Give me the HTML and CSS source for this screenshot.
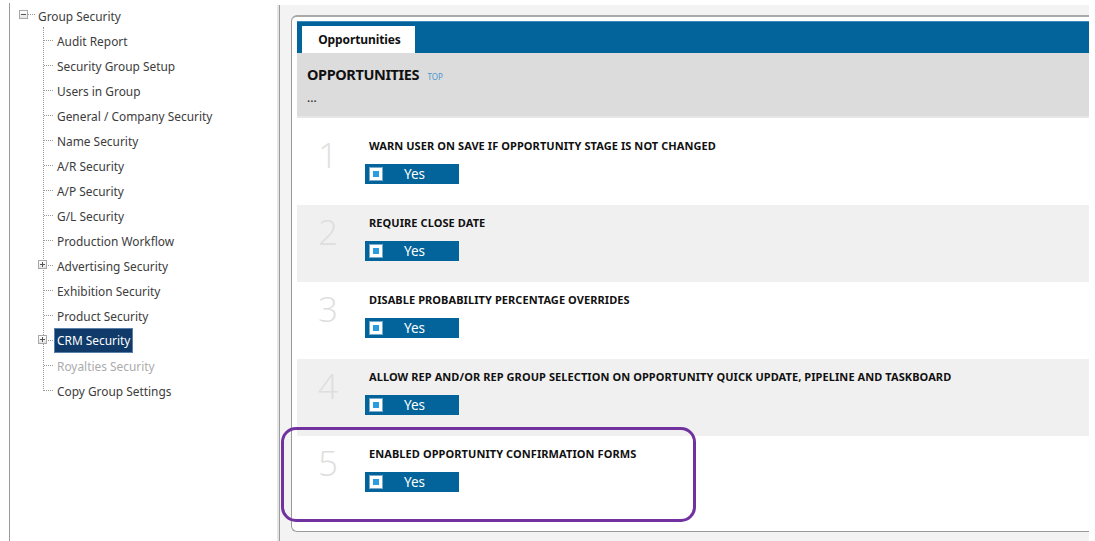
FILE: index.html
```html
<!DOCTYPE html>
<html>
<head>
<meta charset="utf-8">
<link rel="stylesheet" href="styles.css">
</head>
<body>
<div class="app">
  <aside class="tree">
    <div class="root">
      <span class="toggle minus"></span><span class="root-link"></span>
      <span class="label">Group Security</span>
    </div>
    <ul class="children">
      <li><span class="label">Audit Report</span></li>
      <li><span class="label">Security Group Setup</span></li>
      <li><span class="label">Users in Group</span></li>
      <li><span class="label">General / Company Security</span></li>
      <li><span class="label">Name Security</span></li>
      <li><span class="label">A/R Security</span></li>
      <li><span class="label">A/P Security</span></li>
      <li><span class="label">G/L Security</span></li>
      <li><span class="label">Production Workflow</span></li>
      <li><span class="toggle plus"></span><span class="label">Advertising Security</span></li>
      <li><span class="label">Exhibition Security</span></li>
      <li><span class="label">Product Security</span></li>
      <li><span class="toggle plus"></span><span class="label selected">CRM Security</span></li>
      <li><span class="label disabled">Royalties Security</span></li>
      <li><span class="label">Copy Group Settings</span></li>
    </ul>
  </aside>
  <main class="pane">
    <div class="frame">
      <div class="tabbar">
        <div class="tab">Opportunities</div>
      </div>
      <div class="section-head">
        <div class="section-title">OPPORTUNITIES <a class="top-link">TOP</a></div>
        <div class="section-desc">...</div>
      </div>
      <div class="rows">
        <div class="row">
          <div class="num">1</div>
          <div class="body">
            <div class="title">WARN USER ON SAVE IF OPPORTUNITY STAGE IS NOT CHANGED</div>
            <div class="yes"><span class="check"></span><span class="yes-text">Yes</span></div>
          </div>
        </div>
        <div class="row alt">
          <div class="num">2</div>
          <div class="body">
            <div class="title">REQUIRE CLOSE DATE</div>
            <div class="yes"><span class="check"></span><span class="yes-text">Yes</span></div>
          </div>
        </div>
        <div class="row">
          <div class="num">3</div>
          <div class="body">
            <div class="title">DISABLE PROBABILITY PERCENTAGE OVERRIDES</div>
            <div class="yes"><span class="check"></span><span class="yes-text">Yes</span></div>
          </div>
        </div>
        <div class="row alt">
          <div class="num">4</div>
          <div class="body">
            <div class="title">ALLOW REP AND/OR REP GROUP SELECTION ON OPPORTUNITY QUICK UPDATE, PIPELINE AND TASKBOARD</div>
            <div class="yes"><span class="check"></span><span class="yes-text">Yes</span></div>
          </div>
        </div>
        <div class="row last">
          <div class="num">5</div>
          <div class="body">
            <div class="title">ENABLED OPPORTUNITY CONFIRMATION FORMS</div>
            <div class="yes"><span class="check"></span><span class="yes-text">Yes</span></div>
          </div>
        </div>
      </div>
    </div>
  </main>
  <div class="highlight"></div>
</div>
</body>
</html>
```

FILE: styles.css
```css
* { box-sizing: border-box; }
html, body { margin: 0; padding: 0; }
body {
  width: 1095px;
  height: 541px;
  overflow: hidden;
  background: #ffffff;
  font-family: "Noto Sans", "Open Sans", "Liberation Sans", sans-serif;
  color: #333;
}
.app {
  position: relative;
  display: flex;
  height: 541px;
}

/* ---------- tree ---------- */
.tree {
  width: 270px;
  margin-left: 9px;
  margin-top: 3px;
  border-left: 1px solid #9a9a9a;
  font-size: 11.9px;
  color: #3c3c3c;
}
.root {
  position: relative;
  height: 25px;
  display: flex;
  align-items: center;
  padding-left: 26px;
}
.root .toggle {
  left: 9px;
  top: 7px;
}
.root-link {
  position: absolute;
  left: 18px;
  top: 11px;
  width: 7px;
  border-top: 1px dotted #999;
}
.toggle {
  position: absolute;
  width: 9px;
  height: 9px;
  border: 1px solid #a8a8a8;
  background: linear-gradient(#ffffff, #e4e4e4);
}
.toggle::before {
  content: "";
  position: absolute;
  left: 1px;
  top: 3px;
  width: 5px;
  height: 1px;
  background: #555;
}
.toggle.plus::after {
  content: "";
  position: absolute;
  left: 3px;
  top: 1px;
  width: 1px;
  height: 5px;
  background: #555;
}
.children {
  position: relative;
  list-style: none;
  margin: 0 0 0 33px;
  padding: 0;
}
.children::before {
  content: "";
  position: absolute;
  left: 0;
  top: -1px;
  bottom: 12px;
  border-left: 1px dotted #999;
}
.children li {
  position: relative;
  height: 25px;
  display: flex;
  align-items: center;
  padding-left: 12px;
}
.children li::before {
  content: "";
  position: absolute;
  left: 1px;
  top: 12px;
  width: 9px;
  border-top: 1px dotted #999;
}
.children li .toggle {
  left: -5px;
  top: 7px;
  z-index: 1;
}
.label {
  padding: 2px 2px;
  white-space: nowrap;
}
.label.selected {
  background: #0f3a69;
  color: #fff;
  padding: 3px 2px 4px;
  outline: 1px solid #5a7fa8;
}
.label.disabled { color: #ababab; }

/* ---------- right pane ---------- */
.pane {
  width: 810px;
  margin-top: 5px;
  border-left: 1px solid #9c9c9c;
  box-shadow: -2px 0 0 #e6e6e6;
  background: #f3f3f3;
  padding: 10px 0 9px 11px;
  display: flex;
}
.frame {
  flex: 1;
  display: flex;
  flex-direction: column;
  background: #fff;
  border: 1px solid #9a9a9a;
  border-top: 2px solid #a9a9a9;
  border-right: none;
  border-radius: 6px 0 0 6px;
  padding: 4px 0 0 5px;
}
.tabbar {
  height: 32px;
  background: #02649a;
  border-top: 1px solid #3d8bbd;
  padding: 4px 0 0 5px;
  display: flex;
  align-items: flex-end;
}
.tab {
  width: 113px;
  height: 27px;
  background: #fff;
  display: flex;
  align-items: center;
  justify-content: center;
  font-weight: 700;
  font-size: 12px;
  color: #111;
  letter-spacing: -0.1px;
  padding-left: 2px;
}
.section-head {
  height: 65px;
  background: #dcdcdc;
  border-bottom: 2px solid #e6e6e6;
  padding: 11px 0 0 10px;
}
.section-title {
  font-weight: 700;
  font-size: 14.5px;
  color: #111;
  letter-spacing: -0.4px;
}
.top-link {
  font-weight: 400;
  font-size: 8px;
  color: #4c96d0;
  margin-left: 5px;
  letter-spacing: 0;
}
.section-desc {
  margin-top: 5px;
  font-size: 12px;
  color: #222;
}
.rows {
  flex: 1;
  display: flex;
  flex-direction: column;
  padding-top: 10px;
}
.row {
  height: 77px;
  display: flex;
  background: #fff;
}
.row.alt { background: #f0f0f0; }
.row.last { flex: 1; }
.num {
  width: 68px;
  padding-top: 5px;
  padding-left: 21px;
  font-size: 35px;
  font-weight: 300;
  color: #dedede;
  line-height: 44px;
  font-family: "Open Sans", "Noto Sans", sans-serif;
}
.body {
  padding-top: 9px;
}
.title {
  padding-left: 4px;
  font-size: 11px;
  font-weight: 700;
  color: #111;
  line-height: 17px;
  white-space: nowrap;
  letter-spacing: 0.08px;
}
.yes {
  margin-top: 10px;
  width: 94px;
  height: 20px;
  background: #02649a;
  display: flex;
  align-items: center;
  padding-left: 5px;
}
.check {
  width: 12px;
  height: 12px;
  border: 3px solid #fff;
  background: #2a9de0;
  box-shadow: 0 0 0 1px #7aa9c9;
}
.yes-text {
  margin-left: 22px;
  color: #fff;
  font-size: 13.5px;
}

/* ---------- annotation ---------- */
.highlight {
  position: absolute;
  left: 281px;
  top: 427px;
  width: 415px;
  height: 95px;
  border: 3px solid #7132a0;
  border-radius: 15px;
  pointer-events: none;
}
```
